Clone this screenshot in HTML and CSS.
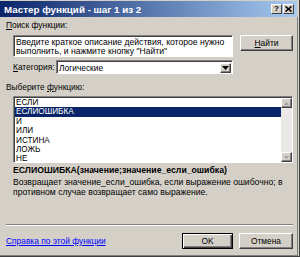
FILE: index.html
```html
<!DOCTYPE html>
<html lang="ru">
<head>
<meta charset="utf-8">
<link rel="stylesheet" href="styles.css">
</head>
<body>
<div class="win">
  <div class="title">
    <span class="ttext">Мастер функций - шаг 1 из 2</span>
    <div class="tbtns"><span class="tb">?</span><span class="tb"><svg width="7" height="6" viewBox="0 0 7 6"><path d="M0.5 0.5L6.5 5.5M6.5 0.5L0.5 5.5" stroke="#000" stroke-width="1.6"/></svg></span></div>
  </div>
  <div class="content">
    <div class="lbl lbl-search"><u>П</u>оиск функции:</div>
    <div class="search">
      <div class="ta">Введите краткое описание действия, которое нужно<br>выполнить, и нажмите кнопку "Найти"</div>
      <div class="btn btn-find"><u>Н</u>айти</div>
    </div>
    <div class="cat">
      <span class="cat-lbl"><u>К</u>атегория:</span>
      <div class="sel"><span class="sel-val">Логические</span><span class="dd"><svg width="7" height="4" viewBox="0 0 7 4"><path d="M0 0h7L3.5 4z" fill="#000"/></svg></span></div>
    </div>
    <div class="lbl lbl-fn">Выберите <u>ф</u>ункцию:</div>
    <div class="list">
      <div class="items">
        <div class="it">ЕСЛИ</div>
        <div class="it sel-it">ЕСЛИОШИБКА</div>
        <div class="it">И</div>
        <div class="it">ИЛИ</div>
        <div class="it">ИСТИНА</div>
        <div class="it">ЛОЖЬ</div>
        <div class="it">НЕ</div>
      </div>
      <div class="sb">
        <div class="sbb"><svg width="5" height="3" viewBox="0 0 5 3"><path d="M2.5 0L5 3H0z" fill="#a0a0a0"/></svg></div>
        <div class="track"></div>
        <div class="sbb"><svg width="5" height="3" viewBox="0 0 5 3"><path d="M0 0h5L2.5 3z" fill="#a0a0a0"/></svg></div>
      </div>
    </div>
    <div class="sig">ЕСЛИОШИБКА(значение;значение_если_ошибка)</div>
    <div class="desc">Возвращает значение_если_ошибка, если выражение ошибочно; в<br>противном случае возвращает само выражение.</div>
    <div class="sep"></div>
    <div class="foot">
      <a class="help" href="#">Справка по этой функции</a>
      <div class="btn btn-ok">OK</div>
      <div class="btn btn-cancel">Отмена</div>
    </div>
  </div>
</div>
</body>
</html>
```

FILE: styles.css
```css
* { box-sizing: border-box; }
html, body { margin: 0; padding: 0; }
body {
  width: 300px;
  height: 257px;
  overflow: hidden;
  font-family: "Liberation Sans", Arial, sans-serif;
  font-size: 8.4px;
  color: #000;
  background: #d4d0c8;
}
.win {
  width: 300px;
  height: 257px;
  border-right: 1px solid #404040;
  border-bottom: 1px solid #404040;
  background: #d4d0c8;
  display: flex;
  flex-direction: column;
}
.title {
  height: 16px;
  margin: 1px 2px 0 0;
  background: linear-gradient(to right, #0a246a, #a6caf0);
  display: flex;
  align-items: center;
  justify-content: space-between;
  padding: 0 3px 0 4px;
  flex-shrink: 0;
}
.ttext {
  color: #fff;
  font-weight: bold;
  font-size: 9.8px;
}
.tbtns { display: flex; gap: 1px; }
.tb {
  width: 11px;
  height: 10px;
  background: #d4d0c8;
  border: 1px solid;
  border-color: #fff #404040 #404040 #fff;
  font-size: 8px;
  font-weight: bold;
  line-height: 8px;
  display: flex;
  align-items: center;
  justify-content: center;
}
.content {
  flex: 1;
  display: flex;
  flex-direction: column;
  padding: 0 4px 0 6px;
  border-right: 1px solid #808080;
  border-bottom: 1px solid #808080;
  margin-right: 1px;
}
.lbl { line-height: 10px; }
.lbl-search { margin-top: 3px; }
.search {
  display: flex;
  align-items: flex-start;
  margin-top: 5px;
  margin-left: 7px;
  gap: 7px;
}
.ta {
  width: 220px;
  height: 22px;
  background: #fff;
  border: 1px solid;
  border-color: #808080 #fff #fff #808080;
  box-shadow: inset 1px 1px 0 #404040;
  padding: 2px 2px 0 2px;
  line-height: 9px;
  font-size: 8.6px;
  white-space: nowrap;
  overflow: hidden;
}
.btn {
  height: 16px;
  background: #d4d0c8;
  border: 1px solid;
  border-color: #fff #404040 #404040 #fff;
  box-shadow: inset -1px -1px 0 #808080;
  display: flex;
  align-items: center;
  justify-content: center;
}
.btn-find { width: 53px; }
.cat {
  display: flex;
  align-items: center;
  margin-top: 3px;
  margin-left: 7px;
}
.cat-lbl { width: 43px; }
.sel {
  width: 177px;
  height: 14px;
  background: #fff;
  border: 1px solid;
  border-color: #808080 #fff #fff #808080;
  box-shadow: inset 1px 1px 0 #404040;
  display: flex;
  align-items: center;
  justify-content: space-between;
  padding: 1px 1px 0 2px;
}
.dd {
  width: 11px;
  height: 10px;
  background: #d4d0c8;
  border: 1px solid;
  border-color: #fff #404040 #404040 #fff;
  box-shadow: inset -1px -1px 0 #808080;
  display: flex;
  align-items: center;
  justify-content: center;
}
.lbl-fn { margin-top: 8px; }
.list {
  margin-top: 4px;
  margin-left: 7px;
  width: 280px;
  height: 67px;
  background: #fff;
  border: 1px solid;
  border-color: #808080 #fff #fff #808080;
  box-shadow: inset 1px 1px 0 #404040;
  display: flex;
  padding: 1px 0 0 1px;
  overflow: hidden;
}
.items { flex: 1; }
.it {
  height: 9.4px;
  line-height: 9.4px;
  padding-left: 1px;
  font-size: 8.2px;
}
.sel-it { background: #0a246a; color: #fff; }
.sb {
  width: 11px;
  display: flex;
  flex-direction: column;
  background: #ebe9e5;
}
.sbb {
  height: 10px;
  background: #d4d0c8;
  border: 1px solid;
  border-color: #fff #404040 #404040 #fff;
  box-shadow: inset -1px -1px 0 #808080;
  display: flex;
  align-items: center;
  justify-content: center;
}
.track { flex: 1; }
.sig {
  margin-top: 2px;
  margin-left: 7px;
  font-weight: bold;
  font-size: 8.7px;
  line-height: 10px;
}
.desc {
  margin-top: 2px;
  margin-left: 7px;
  line-height: 10px;
  font-size: 8.6px;
}
.sep {
  margin-top: 27px;
  height: 2px;
  border-top: 1px solid #808080;
  border-bottom: 1px solid #fff;
}
.foot {
  display: flex;
  align-items: center;
  margin-top: 7px;
  gap: 6px;
}
.help {
  color: #0000ff;
  text-decoration: underline;
  flex: 1;
}
.btn-ok {
  width: 51px;
  border-color: #000;
  box-shadow: inset 1px 1px 0 #fff, inset -1px -1px 0 #404040, inset -2px -2px 0 #808080;
}
.btn-cancel { width: 54px; }
```
